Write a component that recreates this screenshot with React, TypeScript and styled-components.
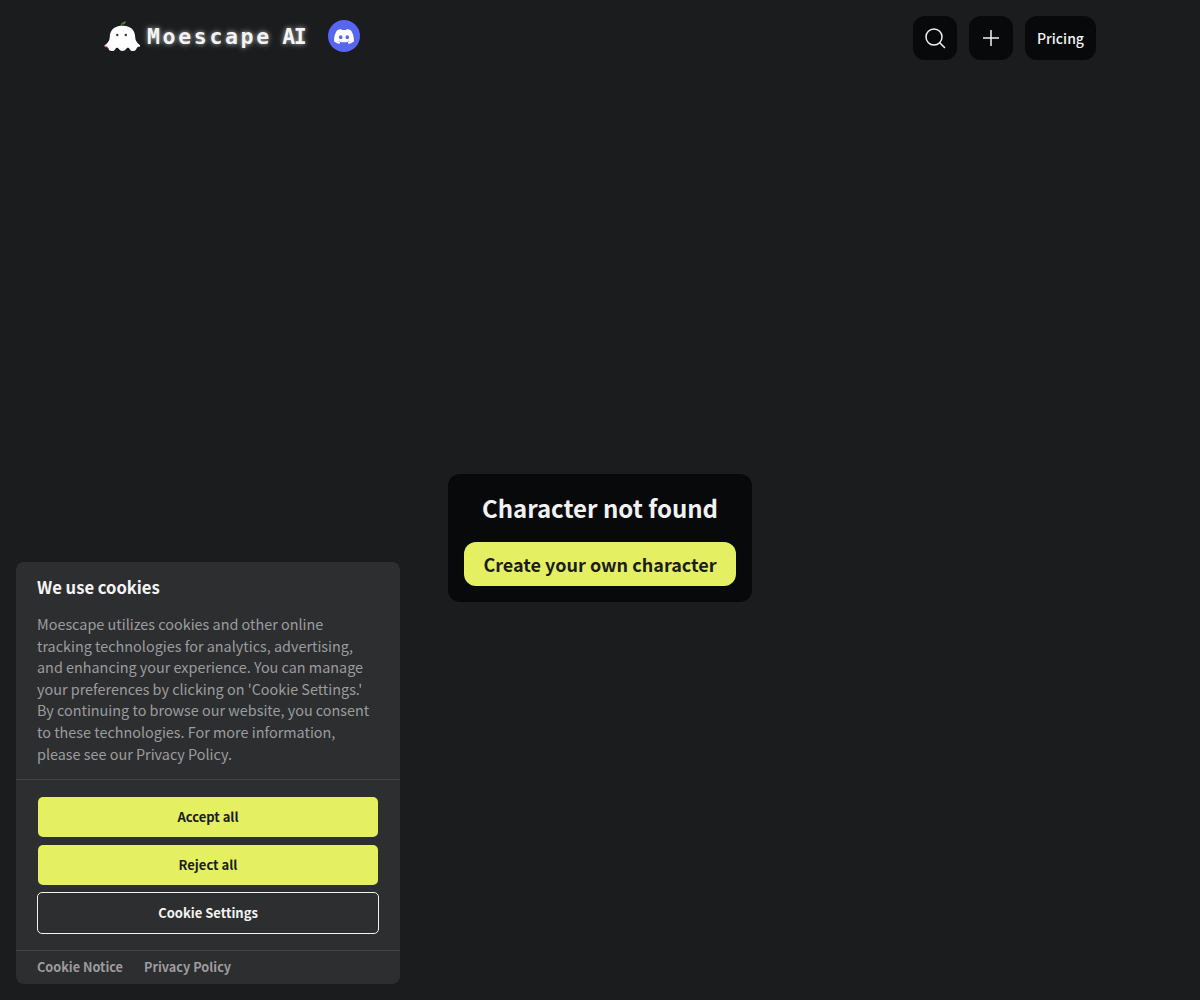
import styled, { createGlobalStyle } from 'styled-components';

const FONT = `"Noto Sans CJK JP", "Noto Sans", sans-serif`;

const GlobalStyle = createGlobalStyle`
  html, body {
    margin: 0;
    padding: 0;
    background: #1b1c1e;
  }
  * {
    box-sizing: border-box;
  }
  body {
    font-family: ${ FONT };
  }
`;

function GhostLogo() {
  return (
    <svg width="36" height="32" viewBox="0 0 38 34">
      <path d="M18 7c0-2 .8-3.600 2.500-4.500" fill="none" stroke="#3f7a35" strokeWidth="1.400" />
      <path d="M19.500 5c.3-2 1.500-3.500 3.500-4 .2 2-1 3.600-3.500 4z" fill="#4a8a3c" />
      <path
        d="M18.500 6C10.500 6 6 11.500 6 18c0 3.500-2 6.500-5 8.500-1 1-.5 2 1 2 1.200 0 2 .6 2.800 2.300 1.200 2.800 5.700 2.900 7 .2.500-1 1.200-1.500 2-1.500s1.500.5 2.200 1.700c1.300 2.400 5.700 2.400 7 0 .7-1.200 1.400-1.700 2.200-1.700s1.500.5 2 1.500c1.300 2.700 5.800 2.600 7-.2.800-1.700 1.600-2.300 2.800-2.300 1.500 0 2-1 1-2-3-2-5-5-5-8.500 0-6.500-4.500-12-12.500-12z"
        fill="#fff"
      />
      <path d="M1 26.500c-1 1-.5 2 1 2 1.200 0 2 .6 2.800 2.300" fill="none" stroke="#e0487f" strokeWidth="1" />
      <circle cx="14" cy="16" r="1.300" fill="#35353a" />
      <circle cx="23" cy="16" r="1.300" fill="#35353a" />
    </svg>
  );
}

function DiscordGlyph() {
  return (
    <svg width="20" height="15" viewBox="0 0 127.140 96.360" fill="#fff">
      <path d="M107.700 8.070A105.150 105.150 0 0 0 81.470 0a72.060 72.060 0 0 0-3.360 6.830 97.680 97.680 0 0 0-29.110 0A72.370 72.370 0 0 0 45.640 0a105.890 105.890 0 0 0-26.250 8.090C2.790 32.650-1.710 56.600.54 80.210a105.730 105.730 0 0 0 32.170 16.150 77.700 77.700 0 0 0 6.890-11.110 68.420 68.420 0 0 1-10.850-5.180c.91-.66 1.800-1.340 2.660-2a75.570 75.570 0 0 0 64.320 0c.87.710 1.760 1.390 2.660 2a68.680 68.680 0 0 1-10.870 5.190 77 77 0 0 0 6.890 11.100 105.250 105.250 0 0 0 32.190-16.140c2.640-27.380-4.510-51.110-18.900-72.150zM42.450 65.690C36.180 65.690 31 60 31 53s5-12.740 11.430-12.740S54 46 53.890 53s-5.050 12.690-11.440 12.690zm42.240 0C78.410 65.690 73.250 60 73.250 53s5-12.740 11.440-12.740S96.230 46 96.120 53s-5.040 12.690-11.430 12.690z" />
    </svg>
  );
}

export default function App() {
  return (
    <Page>
      <GlobalStyle />
      <Header>
        <Brand>
          <GhostLogo />
          <Wordmark>Moescape <WordmarkTail>AI</WordmarkTail></Wordmark>
          <DiscordBadge>
            <DiscordGlyph />
          </DiscordBadge>
        </Brand>
        <Actions>
          <IconButton aria-label="Search">
            <svg width="24" height="24" viewBox="0 0 24 24" fill="none" stroke="#f2f2f2" strokeWidth="1.500" strokeLinecap="round">
              <circle cx="11" cy="11" r="8" />
              <path d="M17 17l4.500 4.500" />
            </svg>
          </IconButton>
          <IconButton aria-label="Create">
            <svg width="24" height="24" viewBox="0 0 24 24" fill="none" stroke="#f2f2f2" strokeWidth="1.500">
              <path d="M12 4v16M4 12h16" />
            </svg>
          </IconButton>
          <PricingButton>Pricing</PricingButton>
        </Actions>
      </Header>

      <Main>
        <NotFoundCard>
          <NotFoundTitle>Character not found</NotFoundTitle>
          <CreateButton>Create your own character</CreateButton>
        </NotFoundCard>
      </Main>

      <CookieBanner>
        <CookieBody>
          <CookieTitle>We use cookies</CookieTitle>
          <CookieText>
            Moescape utilizes cookies and other online tracking technologies for analytics, advertising, and enhancing your experience. You can manage your preferences by clicking on 'Cookie Settings.' By continuing to browse our website, you consent to these technologies. For more information, please see our Privacy Policy.
          </CookieText>
        </CookieBody>
        <CookieActions>
          <CookieButton>Accept all</CookieButton>
          <CookieButton>Reject all</CookieButton>
          <CookieButton outlined>Cookie Settings</CookieButton>
        </CookieActions>
        <CookieFooter>
          <CookieLink>Cookie Notice</CookieLink>
          <CookieLink>Privacy Policy</CookieLink>
        </CookieFooter>
      </CookieBanner>
    </Page>
  );
}

const Page = styled.div`
  position: relative;
  height: 1000px;
  overflow: hidden;
  background: #1b1c1e;
`;

const Header = styled.header`
  height: 76px;
  padding: 16px 104px 0;
  display: flex;
  justify-content: space-between;
  align-items: flex-start;
`;

const Brand = styled.div`
  display: flex;
  align-items: center;
  height: 42px;
  margin-top: -1px;
`;

const Wordmark = styled.span`
  margin-left: 7px;
  width: 159px;
  font-family: "DejaVu Sans Mono", monospace;
  font-size: 21.5px;
  font-weight: 700;
  letter-spacing: 2.65px;
  word-spacing: -5px;
  white-space: nowrap;
  color: #f4f4f4;
  text-shadow: 0 0 4px rgba(255, 255, 255, 0.55), 0 0 8px rgba(255, 255, 255, 0.25);
`;

const WordmarkTail = styled.span`
  letter-spacing: -1.5px;
`;

const DiscordBadge = styled.div`
  width: 32px;
  height: 32px;
  margin-left: 22px;
  border-radius: 50%;
  background: #5865f2;
  display: flex;
  align-items: center;
  justify-content: center;
`;

const Actions = styled.div`
  display: flex;
  gap: 12px;
`;

const IconButton = styled.button`
  width: 44px;
  height: 44px;
  padding: 0;
  border: 0;
  border-radius: 12px;
  background: #08090a;
  display: flex;
  align-items: center;
  justify-content: center;
`;

const PricingButton = styled.button`
  width: 71px;
  height: 44px;
  padding: 0;
  border: 0;
  border-radius: 12px;
  background: #08090a;
  color: #f2f2f2;
  font-family: ${ FONT };
  font-size: 14px;
  font-weight: 500;
`;

const Main = styled.main`
  height: 924px;
  display: flex;
  align-items: center;
  justify-content: center;
`;

const NotFoundCard = styled.div`
  width: 304px;
  height: 128px;
  padding: 16px;
  border-radius: 12px;
  background: #08090a;
  display: flex;
  flex-direction: column;
  align-items: center;
`;

const NotFoundTitle = styled.h1`
  margin: 0;
  height: 52px;
  line-height: 36px;
  font-size: 24px;
  font-weight: 700;
  color: #f2f2f2;
`;

const CreateButton = styled.button`
  width: 100%;
  height: 44px;
  padding: 0;
  border: 0;
  border-radius: 12px;
  background: #e4ef62;
  color: #1b1c1e;
  font-family: ${ FONT };
  font-size: 18px;
  font-weight: 700;
`;

const CookieBanner = styled.aside`
  position: absolute;
  left: 16px;
  top: 562px;
  width: 384px;
  height: 422px;
  border-radius: 8px;
  background: #2d2e30;
  display: flex;
  flex-direction: column;
`;

const CookieBody = styled.div`
  height: 218px;
  padding: 12px 21px 0;
  border-bottom: 1px solid #434446;
`;

const CookieTitle = styled.h2`
  margin: 0 0 13px;
  line-height: 26px;
  font-size: 16.6px;
  font-weight: 700;
  color: #f4f4f4;
`;

const CookieText = styled.p`
  margin: 0;
  font-size: 14.4px;
  line-height: 21.6px;
  color: #9c9c9e;
`;

const CookieActions = styled.div`
  height: 171px;
  padding: 17px 21px 0;
  display: flex;
  flex-direction: column;
  align-items: center;
  gap: 8px;
  border-bottom: 1px solid #434446;
`;

type CookieButtonProps = {
  outlined?: boolean
}
const CookieButton = styled.button<CookieButtonProps>`
  width: ${ ({ outlined }) => outlined ? '342px' : '340px' };
  height: ${ ({ outlined }) => outlined ? '42px' : '40px' };
  margin-top: ${ ({ outlined }) => outlined ? '-1px' : '0' };
  padding: 0 0 2px;
  border: ${ ({ outlined }) => outlined ? '1px solid #f2f2f2' : '0' };
  border-radius: 5px;
  background: ${ ({ outlined }) => outlined ? 'transparent' : '#e4ef62' };
  color: ${ ({ outlined }) => outlined ? '#f4f4f4' : '#1b1c1e' };
  font-family: ${ FONT };
  font-size: 13px;
  font-weight: 700;
`;

const CookieFooter = styled.div`
  flex: 1;
  padding: 0 21px 2px;
  display: flex;
  align-items: center;
  gap: 21px;
`;

const CookieLink = styled.a`
  font-size: 12.7px;
  font-weight: 700;
  color: #9c9c9e;
`;
